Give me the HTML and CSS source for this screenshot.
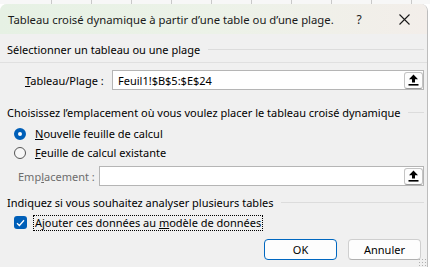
FILE: index.html
```html
<!DOCTYPE html>
<html lang="fr">
<head>
<meta charset="utf-8">
<title>Tableau croisé dynamique</title>
<link rel="stylesheet" href="styles.css">
</head>
<body>
<div class="excel-strip">
  <div class="col"></div><div class="col"></div><div class="col"></div><div class="col"></div><div class="col"></div><div class="col"></div><div class="col"></div><div class="col"></div><div class="col"></div><div class="col"></div>
</div>
<div class="dialog">
  <div class="titlebar">
    <span class="title">Tableau croisé dynamique à partir d’une table ou d’une plage.</span>
    <span class="help">?</span>
    <span class="close"><svg width="11" height="11" viewBox="0 0 11 11"><path d="M0.5 0.5 L10.5 10.5 M10.5 0.5 L0.5 10.5" stroke="#1a1a1a" stroke-width="1.1" fill="none"/></svg></span>
  </div>
  <div class="content">
    <div class="section-head"><span>Sélectionner un tableau ou une plage</span><span class="rule"></span></div>
    <div class="sep"></div>
    <div class="field-row field-table">
      <span class="field-label"><u>T</u>ableau/Plage :</span>
      <div class="input">
        <span class="input-text">Feuil1!$B$5:$E$24</span>
        <span class="pick"><svg width="11" height="12" viewBox="0 0 11 12"><path d="M5.5 0.5 L10 5.2 L7 5.2 L7 8.5 L4 8.5 L4 5.2 L1 5.2 Z" fill="#000"/><rect x="0.5" y="10" width="10" height="1.6" fill="#000"/></svg></span>
      </div>
    </div>
    <div class="section-head head2"><span>Choisissez l’emplacement où vous voulez placer le tableau croisé dynamique</span><span class="rule"></span></div>
    <div class="radio-row first"><span class="radio checked"></span><span><u>N</u>ouvelle feuille de calcul</span></div>
    <div class="radio-row"><span class="radio"></span><span><u>F</u>euille de calcul existante</span></div>
    <div class="field-row field-place">
      <span class="field-label disabled">Emp<u>l</u>acement :</span>
      <div class="input">
        <span class="input-text"></span>
        <span class="pick"><svg width="11" height="12" viewBox="0 0 11 12"><path d="M5.5 0.5 L10 5.2 L7 5.2 L7 8.5 L4 8.5 L4 5.2 L1 5.2 Z" fill="#000"/><rect x="0.5" y="10" width="10" height="1.6" fill="#000"/></svg></span>
      </div>
    </div>
    <div class="section-head head3"><span>Indiquez si vous souhaitez analyser plusieurs tables</span><span class="rule"></span></div>
    <div class="check-row">
      <span class="checkbox"><svg width="9" height="8" viewBox="0 0 9 8"><path d="M1 4.2 L3.4 6.5 L8 1.3" stroke="#fff" stroke-width="1.3" fill="none"/></svg></span>
      <span class="focus">Ajouter ces données au <u>m</u>odèle de données</span>
    </div>
    <div class="buttons">
      <span class="btn default">OK</span>
      <span class="btn">Annuler</span>
    </div>
  </div>
  <span class="grip"></span>
</div>
</body>
</html>
```
FILE: styles.css
```css
html, body {
  margin: 0;
  padding: 0;
  width: 430px;
  height: 267px;
  overflow: hidden;
  background: #ffffff;
  font-family: "Noto Sans", "Segoe UI", sans-serif;
  font-size: 11px;
  color: #000;
}
.excel-strip {
  height: 4px;
  display: flex;
  background: #f7f7f7;
  padding-left: 12px;
  overflow: hidden;
}
.col {
  width: 39px;
  border-right: 1px solid #c9c9c9;
  flex: none;
}
.dialog {
  position: relative;
  width: 428px;
  height: 263px;
  background: #f0f0f0;
  border-right: 1px solid #bdbdbd;
  border-top-left-radius: 7px;
  border-top-right-radius: 7px;
  box-sizing: border-box;
  overflow: hidden;
}
.titlebar {
  height: 30px;
  display: flex;
  align-items: center;
  padding-left: 8px;
  background: linear-gradient(90deg, #e6f1e4 0%, #ecf2e8 50%, #f3eeea 100%);
  color: #1a1a1a;
  font-size: 11.3px;
}
.title {
  flex: 1;
  white-space: nowrap;
}
.help {
  width: 14px;
  text-align: center;
  margin-right: 33px;
  font-size: 12px;
}
.close {
  display: flex;
  margin-right: 17px;
}
.content {
  padding: 6px 3px 0 7px;
}
.section-head {
  height: 18px;
  display: flex;
  align-items: center;
  white-space: nowrap;
}
.rule {
  flex: 1;
  height: 1px;
  background: #dcdcdc;
  margin-left: 8px;
}
.sep {
  height: 1px;
  background: #e0e0e0;
  margin: 4px -7px 0 -7px;
}
.field-row {
  display: flex;
  align-items: center;
  height: 20px;
}
.field-table {
  margin-top: 7px;
  padding-left: 18px;
}
.field-table .field-label {
  width: 87px;
}
.field-place {
  margin-top: 4px;
  padding-left: 11px;
}
.field-place .field-label {
  width: 81px;
}
.field-label {
  flex: none;
  white-space: nowrap;
}
.disabled {
  color: #6d6d6d;
}
.input {
  flex: 1;
  height: 20px;
  box-sizing: border-box;
  background: #fff;
  border: 1px solid #b5b5b5;
  display: flex;
  align-items: center;
  padding-left: 5px;
}
.input-text {
  flex: 1;
  white-space: nowrap;
}
.pick {
  width: 19px;
  height: 17px;
  box-sizing: border-box;
  border: 1px solid #c4c4c4;
  border-bottom-color: #9a9a9a;
  border-radius: 3px;
  display: flex;
  align-items: center;
  justify-content: center;
  background: #fdfdfd;
}
.head2 { margin-top: 13px; }
.radio-row {
  height: 19px;
  display: flex;
  align-items: center;
  padding-left: 7px;
}
.radio-row.first { margin-top: 3px; }
.radio {
  width: 12px;
  height: 12px;
  border-radius: 50%;
  box-sizing: border-box;
  border: 1px solid #555;
  background: #f7f7f7;
  margin-right: 9px;
  flex: none;
}
.radio.checked {
  background: #fff;
  border: 4px solid #005fb8;
}
.head3 { margin-top: 7px; }
.check-row {
  margin-top: 3px;
  height: 17px;
  display: flex;
  align-items: center;
  padding-left: 7px;
}
.checkbox {
  width: 13px;
  height: 13px;
  border-radius: 3px;
  background: #005fb8;
  display: flex;
  align-items: center;
  justify-content: center;
  margin-right: 6px;
  flex: none;
}
.focus {
  border: 1px dotted #000;
  padding: 0 1px;
  line-height: 14px;
  white-space: nowrap;
}
.buttons {
  margin-top: 8px;
  display: flex;
  justify-content: flex-end;
  gap: 11px;
  padding-right: 3px;
}
.btn {
  width: 73px;
  height: 21px;
  box-sizing: border-box;
  border: 1px solid #cfcfcf;
  border-bottom-color: #b0b0b0;
  border-radius: 4px;
  background: #fdfdfd;
  display: flex;
  align-items: center;
  justify-content: center;
}
.btn.default {
  border: 1px solid #0067c0;
}
.grip {
  position: absolute;
  right: 1px;
  bottom: 1px;
  width: 8px;
  height: 8px;
  background-image: radial-gradient(circle, #b0b0b0 0.8px, transparent 1px);
  background-size: 3px 3px;
}
```
